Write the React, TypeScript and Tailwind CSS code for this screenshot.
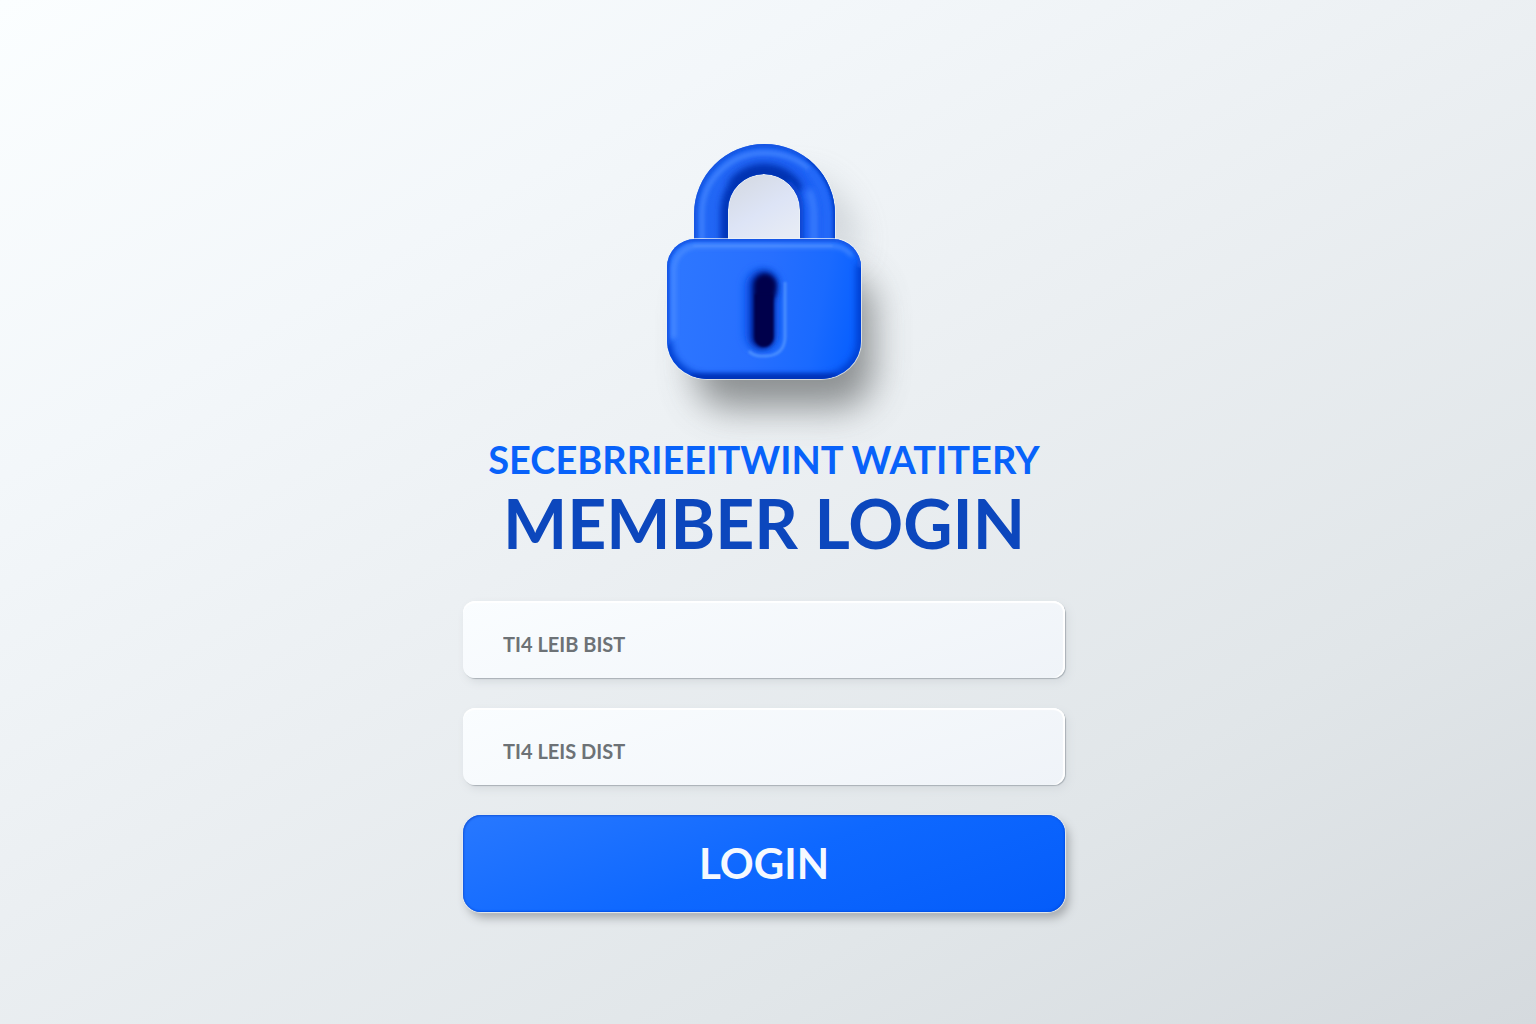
import { useState } from "react";
import type { FormEvent } from "react";

const fields = [
  { id: "member", type: "text", label: "Member", placeholder: "TI4 LEIB BIST" },
  { id: "password", type: "password", label: "Password", placeholder: "TI4 LEIS DIST" },
];

const blurs = [
  { id: "b1", dev: 1.2 },
  { id: "b2", dev: 2 },
  { id: "b3", dev: 3 },
  { id: "b5", dev: 5 },
  { id: "b18", dev: 18 },
];

const SHACKLE =
  "M27 106 V70 A70.5 70 0 0 1 168 70 V106 H133 V66 A36 36 0 0 0 61 66 V106 Z";

const BODY =
  "M0 123 A28 28 0 0 1 28 95 H166 A28 28 0 0 1 194 123 V197 A40 38 0 0 1 154 235 H40 A40 38 0 0 1 0 197 Z";

function Padlock() {
  return (
    <svg viewBox="0 0 194 235" className="w-[194px] h-[235px] overflow-visible" aria-hidden="true">
      <defs>
        <linearGradient id="bodyFill" x1="0" y1="0.3" x2="1" y2="0.45">
          <stop offset="0" stopColor="#2e77ff" />
          <stop offset="0.5" stopColor="#276fff" />
          <stop offset="0.8" stopColor="#1a6aff" />
          <stop offset="1" stopColor="#0860ff" />
        </linearGradient>
        <linearGradient id="shackleFill" x1="0" y1="0" x2="1" y2="0.3">
          <stop offset="0" stopColor="#2469f5" />
          <stop offset="1" stopColor="#1a5ff5" />
        </linearGradient>
        <linearGradient id="holeFill" x1="0" y1="0" x2="0.6" y2="1">
          <stop offset="0" stopColor="#d3d8e0" />
          <stop offset="0.6" stopColor="#dde4f6" />
          <stop offset="1" stopColor="#e6ebf5" />
        </linearGradient>
        {blurs.map(({ id, dev }) => (
          <filter key={id} id={id} filterUnits="userSpaceOnUse" x="-80" y="-80" width="360" height="400">
            <feGaussianBlur stdDeviation={dev} />
          </filter>
        ))}
        <clipPath id="shackleClip"><path d={SHACKLE} /></clipPath>
        <clipPath id="bodyClip"><path d={BODY} /></clipPath>
      </defs>

      {/* Cast shadows */}
      <path d="M110 80 V50 H140 Q170 60 176 110" fill="none" stroke="#8f969d" strokeWidth="20" opacity="0.6" filter="url(#b18)" />
      <rect x="28" y="130" width="178" height="134" rx="34" fill="#6c6f71" opacity="0.75" filter="url(#b18)" />

      {/* Shackle */}
      <path d="M61 100 V66 A36 36 0 0 1 133 66 V100 Z" fill="url(#holeFill)" />
      <path d={SHACKLE} fill="url(#shackleFill)" stroke="#eef3f8" strokeOpacity="0.7" strokeWidth="2" paintOrder="stroke" />
      <g clipPath="url(#shackleClip)">
        <path d="M27 106 V70 A70.5 70 0 0 1 168 70 V106" fill="none" stroke="#0f4fdc" strokeWidth="5" filter="url(#b2)" />
        <path d="M61 106 V66 A36 36 0 0 1 97 30 Q118 30 128 48" fill="none" stroke="#0034b8" strokeWidth="15" filter="url(#b3)" />
        <path d="M66 42 A38 38 0 0 1 130 46" fill="none" stroke="#0030b0" strokeWidth="11" filter="url(#b5)" />
        <path d="M133 106 V66 A36 36 0 0 0 120 38" fill="none" stroke="#0a45d0" strokeWidth="7" filter="url(#b2)" />
        <path d="M35 106 V70 A62 61 0 0 1 97 9 Q124 9 142 25" fill="none" stroke="#4285ff" strokeWidth="4" filter="url(#b2)" />
        <path d="M142 25 Q160 45 160 74 V106" fill="none" stroke="#2a70fb" strokeWidth="5" filter="url(#b3)" />
        <path d="M142 46 Q147 58 147 72 V106" fill="none" stroke="#3f82ff" strokeWidth="6" filter="url(#b3)" />
        <path d="M140 14 A70.5 70 0 0 1 168 70 V106" fill="none" stroke="#003fc9" strokeWidth="3" filter="url(#b1)" />
      </g>

      {/* Body */}
      <path d={BODY} fill="url(#bodyFill)" stroke="#eef3f8" strokeOpacity="0.7" strokeWidth="2" paintOrder="stroke" />
      <g clipPath="url(#bodyClip)">
        <path d="M0 197 A40 38 0 0 0 40 235 H154 A40 38 0 0 0 194 197 V120" fill="none" stroke="#0040d2" strokeWidth="10" filter="url(#b3)" />
        <path d="M24 236 H170" fill="none" stroke="#0033b8" strokeWidth="12" filter="url(#b2)" />
        <path d="M0 200 V123 A28 28 0 0 1 28 95 H166 A28 28 0 0 1 194 123" fill="none" stroke="#1359e8" strokeWidth="6" filter="url(#b1)" />
        <path d="M7 194 V126 A24 24 0 0 1 31 102 H164 Q178 102 185 112" fill="none" stroke="#4f90ff" strokeWidth="3" filter="url(#b2)" />
        <path d="M26 102 H166" fill="none" stroke="#5a98ff" strokeWidth="1.5" opacity="0.7" filter="url(#b1)" />
      </g>

      {/* Keyhole */}
      <rect x="78" y="126" width="34" height="80" rx="17" fill="#0b56ee" filter="url(#b5)" />
      <path d="M118 138 V194 Q117 211 100 212 H92 Q85 211 82 207" fill="none" stroke="#4a8eff" strokeWidth="3" filter="url(#b1)" />
      <path d="M83 194 V141 A13.5 14 0 0 1 111 141 Q111 150 107 157 V194 A11 10 0 0 1 83 194 Z" fill="#002aa8" filter="url(#b3)" />
      <path d="M87 193 V142 A11 12 0 0 1 109 142 Q109 149 106 156 V194 A9.5 9 0 0 1 87 193 Z" fill="#00024c" filter="url(#b2)" />
      <path d="M88 193 V150 H106 V194 A8 8 0 0 1 88 193 Z" fill="#00024c" filter="url(#b1)" />
    </svg>
  );
}

export default function App() {
  const [values, setValues] = useState<Record<string, string>>({});

  const onSubmit = (e: FormEvent) => e.preventDefault();

  return (
    <main className="min-h-screen flex flex-col items-center pl-6 pr-8 pt-36 pb-16 bg-[linear-gradient(150deg,#fbfeff_0%,#f3f7fa_25%,#ebeff2_48%,#e1e6e9_75%,#d5dade_100%)] font-[Lato,sans-serif]">
      <Padlock />

      <header className="mt-14 text-center font-bold whitespace-nowrap">
        <p className="text-[38px] leading-12 text-[#0862fa]">SECEBRRIEEITWINT WATITERY</p>
        <h1 className="mt-2 text-[68px] leading-16 text-[#0c47bd]">MEMBER LOGIN</h1>
      </header>

      <form onSubmit={onSubmit} className="mt-[46px] w-full max-w-[602px] flex flex-col gap-[30px]">
        {fields.map(({ id, type, label, placeholder }) => (
          <input
            key={id}
            id={id}
            type={type}
            aria-label={label}
            placeholder={placeholder}
            value={values[id] ?? ""}
            onChange={(e) => setValues({ ...values, [id]: e.target.value })}
            className="w-full h-[77px] rounded-xl px-10 pt-2 text-xl font-bold text-[#5d6368] placeholder:text-[#6d7276] bg-[linear-gradient(160deg,#fafdff,#eff3f8)] shadow-[inset_0_2px_1px_#ffffff,inset_-2px_0_1px_#ffffff,1px_1px_1px_#a9b0b6,3px_4px_8px_#d6dbdf] outline-none"
          />
        ))}
        <button
          type="submit"
          className="h-[97px] rounded-[18px] text-[42px] font-bold text-[#f5f9ff] bg-[linear-gradient(160deg,#2878ff,#0e68ff_50%,#045cfa)] shadow-[inset_1px_1px_2px_#1558dc,inset_-1px_-1px_2px_#0050e8,0_0_1px_1px_#e6ebf0,4px_6px_10px_#a6aaae]"
        >
          LOGIN
        </button>
      </form>
    </main>
  );
}
